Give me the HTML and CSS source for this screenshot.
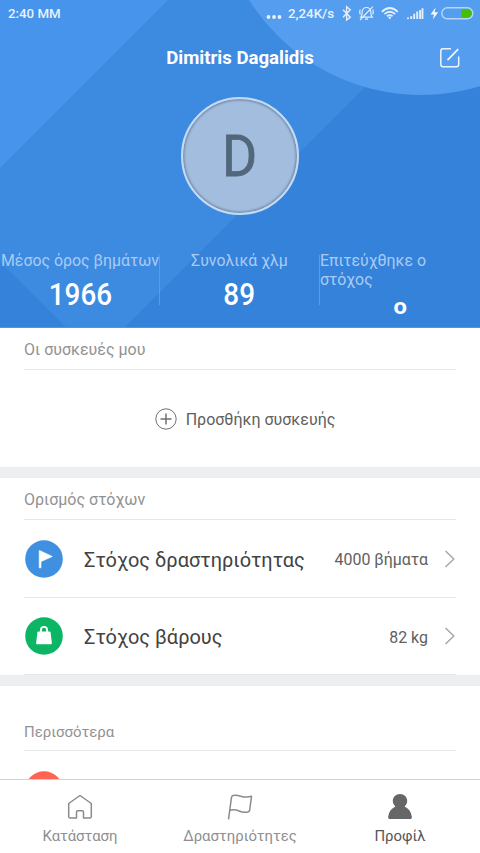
FILE: index.html
```html
<!DOCTYPE html>
<html lang="el">
<head>
<meta charset="utf-8">
<title>Προφίλ</title>
<link rel="stylesheet" href="styles.css">
</head>
<body>
<div class="app">
  <header class="hero">
    <svg class="hero-bg" width="480" height="328" viewBox="0 0 480 328">
      <rect width="480" height="328" fill="#3582db"/>
      <path d="M0 0H480L452 0L124 328H67L0 262Z" fill="#3d8ae1"/>
      <path d="M0 0H168L0 168Z" fill="#4694eb"/>
      <circle cx="421" cy="-108" r="203" fill="#559dee"/>
      <path d="M0 327.5H480" stroke="#5095df"/>
    </svg>
    <div class="status">
      <span class="time">2:40 ΜΜ</span>
      <div class="status-right">
        <svg class="dots" width="16" height="27" viewBox="0 0 16 27" fill="#e9f2fc"><circle cx="2.5" cy="17" r="1.9"/><circle cx="8" cy="17" r="1.9"/><circle cx="13.500" cy="17" r="1.9"/></svg>
        <span class="speed">2,24K/s</span>
        <svg class="icons" width="138" height="27" viewBox="338 0 138 27" fill="none" stroke="#e4effc" stroke-width="1.4">
          <path d="M343 9.800L350.300 17.200L346.600 20V6.800L350.300 9.800L343 17.200"/>
          <g stroke-width="1.200">
            <path d="M360.800 17.200C362.300 15.800 362 13.500 362.200 11.500C362.600 8.800 364.300 7.500 366.500 7.500S370.400 8.800 370.800 11.500C371 13.500 370.700 15.800 372.200 17.200ZM365 19.200H368M360 20L372.800 6.600"/>
            <path d="M360.300 9.500Q359 12 360.300 14.500M372.700 9.500Q374 12 372.700 14.500"/>
          </g>
          <g stroke-width="1.800">
            <path d="M381.800 11.800Q389.800 4.200 397.800 11.800M384.400 14.200Q389.800 9.300 395.200 14.200M387 16.300Q389.800 13.900 392.600 16.300"/>
          </g>
          <circle cx="389.800" cy="17.800" r="1.200" fill="#e4effc" stroke="none"/>
          <path d="M408 19V17.600M411.200 19V16.200M414.200 19V13.700M417.200 19V11.500M420.100 19V10M422.500 19V8.200" stroke-width="1.900"/>
          <path d="M435.600 7.500L430.500 14.500H434L432.800 19.500L438.200 12.300H434.700Z" fill="#f2f8ff" stroke="none"/>
          <rect x="441.800" y="7.800" width="31" height="11" rx="5.500" stroke="#b7d5f7"/>
          <path d="M461.500 9.200H467.500A4.200 4.200 0 0 1 467.500 17.600H461.500Z" fill="#43c000" stroke="none"/>
        </svg>
      </div>
    </div>
    <div class="titlebar">
      <h1>Dimitris Dagalidis</h1>
      <svg class="edit" width="22" height="22" viewBox="0 0 22 22" fill="none" stroke="#edf5fd" stroke-width="1.500"><path d="M12 1.800H4Q1.800 1.800 1.800 4V17.500Q1.800 19.700 4 19.700H17.500Q19.700 19.700 19.700 17.500V9.500"/><path d="M8.500 13.200L19.200 2.200" stroke-width="1.800"/></svg>
    </div>
    <div class="avatar"><span>D</span></div>
    <div class="stats">
      <div class="stat"><p>Μέσος όρος βημάτων</p><b>1966</b></div>
      <div class="stat"><p>Συνολικά χλμ</p><b>89</b></div>
      <div class="stat last"><p>Επιτεύχθηκε ο στόχος</p><b>o</b></div>
    </div>
  </header>

  <main class="content">
    <section class="devices">
      <h2>Οι συσκευές μου</h2>
      <div class="add">
        <svg width="22" height="22" viewBox="0 0 22 22" fill="none" stroke="#707070"><circle cx="11" cy="11" r="10.200"/><path d="M5.500 11H16.500M11 5.500V16.500" stroke-width="1.500"/></svg>
        <span>Προσθήκη συσκευής</span>
      </div>
    </section>
    <section class="goals">
      <h2>Ορισμός στόχων</h2>
      <div class="row">
        <svg width="38" height="38" viewBox="0 0 38 38"><circle cx="19" cy="19" r="18.800" fill="#4090e1"/><path d="M14.700 10.500L27.300 16.500L16 21.600V27.800H14.200V10.800Z" fill="#fff" stroke="#fff" stroke-width=".6" stroke-linejoin="round"/></svg>
        <span class="name">Στόχος δραστηριότητας</span>
        <span class="value">4000 βήματα</span>
        <svg class="chev" width="12" height="18" viewBox="0 0 12 18" fill="none" stroke="#a9a9a9" stroke-width="1.500"><path d="M1.500 1L9.800 9L1.500 17"/></svg>
      </div>
      <div class="row">
        <svg width="38" height="38" viewBox="0 0 38 38"><circle cx="19" cy="19" r="18.800" fill="#0cb563"/><path d="M13.200 14.500H24.800Q25.400 14.500 25.500 15.200L26.900 26Q27 27.200 26 27.200H12Q11 27.200 11.100 26L12.500 15.200Q12.600 14.500 13.200 14.500Z" fill="#fff"/><path d="M16 15.500V12.500Q16 9.800 19 9.800T22 12.500V15.500" fill="none" stroke="#fff" stroke-width="1.800"/></svg>
        <span class="name">Στόχος βάρους</span>
        <span class="value">82 kg</span>
        <svg class="chev" width="12" height="18" viewBox="0 0 12 18" fill="none" stroke="#a9a9a9" stroke-width="1.500"><path d="M1.500 1L9.800 9L1.500 17"/></svg>
      </div>
    </section>
    <section class="more">
      <h2>Περισσότερα</h2>
      <div class="row"><svg width="38" height="38" viewBox="0 0 38 38"><circle cx="19" cy="19" r="18.800" fill="#ff6452"/></svg></div>
    </section>
  </main>

  <nav class="tabs">
    <div class="tab">
      <svg width="28" height="28" viewBox="0 0 28 28" fill="none" stroke="#8b8b8b" stroke-width="1.500" stroke-linejoin="round"><path d="M2.700 10.500L14 2.500L25.300 10.500V23.500Q25.300 25 23.800 25H17.500V18.800Q17.500 17.700 16.400 17.700H11.600Q10.500 17.700 10.500 18.800V25H4.200Q2.700 25 2.700 23.500Z"/></svg>
      <span>Κατάσταση</span>
    </div>
    <div class="tab">
      <svg width="28" height="28" viewBox="0 0 28 28" fill="none" stroke="#8b8b8b" stroke-width="1.500" stroke-linecap="round" stroke-linejoin="round"><path d="M2.600 25.800L5.500 4.200Q6 2.400 8 2.300C15 1.500 16 6 25.500 3.300L23.700 17Q23.400 18.700 21.800 19C13 20.800 13 15 3.700 17.300"/></svg>
      <span>Δραστηριότητες</span>
    </div>
    <div class="tab active">
      <svg width="28" height="28" viewBox="0 0 28 28" fill="#666"><path d="M14 .900C18.100 .900 21.200 4 21.200 7.800C21.200 10.300 20.200 12.200 18.600 13.500C22.500 15.300 25 18.600 25.800 23.500Q26.100 26.100 24 26.100H4Q1.900 26.100 2.200 23.500C3 18.600 5.500 15.300 9.400 13.500C7.800 12.200 6.800 10.300 6.800 7.800C6.800 4 9.900 .900 14 .900Z"/></svg>
      <span>Προφίλ</span>
    </div>
  </nav>
</div>
</body>
</html>
```
FILE: styles.css
```css
* { box-sizing: border-box; }
body, h1, h2, p { margin: 0; font-weight: 400; }
body { font-family: Roboto, "Noto Sans", sans-serif; background: #fff; }
svg { display: block; flex: none; }
.app { width: 480px; height: 853px; display: flex; flex-direction: column; overflow: hidden; }

.hero { height: 328px; flex: none; position: relative; isolation: isolate; color: #fff; }
.hero-bg { position: absolute; inset: 0; z-index: -1; }
.status { height: 27px; display: flex; justify-content: space-between; padding: 0 4px 0 8px; font-size: 13.3px; font-weight: 500; line-height: 27px; color: #e9f2fc; }
.status-right { display: flex; }
.speed { width: 50px; margin: 0 0 0 6px; white-space: nowrap; }
.titlebar { height: 62px; display: grid; grid-template-columns: 60px 1fr 60px; align-items: center; }
h1 { grid-column: 2; text-align: center; font-size: 18.6px; line-height: 24px; font-weight: 700; }
.edit { margin-left: 19px; margin-top: -1px; }
.avatar { width: 118px; height: 118px; margin: 8px auto 0; border: 2px solid #c4daf5; border-radius: 50%; background: #a2bddd; box-shadow: inset 0 0 2px 1.5px #7990ae; display: flex; align-items: center; justify-content: center; color: #53677c; font-size: 57px; font-weight: 400; line-height: 60px; -webkit-text-stroke: .8px #53677c; }
.avatar span { margin-top: 1px; transform: scaleX(.94); }
.stats { display: grid; grid-template-columns: repeat(3, 160px); margin-top: 36px; }
.stat { position: relative; height: 70px; display: flex; flex-direction: column; align-items: center; }
.stat + .stat::before { content: ""; position: absolute; left: 0; top: 4px; width: 1px; height: 50px; background: #5b9ae4; }
.stat:nth-child(n+2) p { margin-left: 1px; }
.stat:nth-child(n+2) { left: -1px; }
.stat p { font-size: 15.9px; line-height: 19px; color: #a9cbf3; white-space: nowrap; }
.stat.last p { white-space: normal; width: 158px; margin-left: 0; }
.stat b { font-size: 32px; line-height: 38px; margin-top: 5px; font-weight: 500; transform: scaleX(.87); }
.stat.last b { margin: 5px 0 0 2px; font-size: 22px; line-height: 26px; font-weight: 700; transform: scaleX(1.08); }

.content { flex: 1; min-height: 0; overflow: hidden; background: #fff; }
h2 { margin: 0 24px; height: 42px; line-height: 44px; font-size: 16px; color: #929292; border-bottom: 1px solid #e7e7e7; }
.devices { height: 150px; border-bottom: 11px solid #edeef0; }
.add { height: 97px; display: flex; align-items: center; justify-content: center; gap: 9px; padding-left: 10px; font-size: 16px; color: #606060; }
.add span { margin-top: 2px; }
.goals { height: 208px; border-bottom: 11px solid #edeef0; }
.row { height: 78px; margin: 0 24px; border-bottom: 1px solid #e6e6e6; display: flex; align-items: center; padding-left: 1px; }
.goals .row + .row { height: 77px; }
.name { margin: 3px 0 0 21px; font-size: 19.95px; color: #424242; }
.row + .row .name { margin-top: 2px; }
.value { margin: 2px 0 0 auto; font-size: 15.95px; color: #606060; }
.chev { margin-left: 16px; }
.more { padding-top: 23px; }
.more h2 { font-size: 15px; line-height: 47px; }

.tabs { flex: none; height: 74px; border-top: 1px solid #d2d2d2; background: #fff; display: grid; grid-template-columns: repeat(3, 1fr); }
.tab { display: flex; flex-direction: column; align-items: center; padding-top: 13px; font-size: 14.9px; line-height: 20px; color: #8f8f8f; }
.tab span { margin-top: 5px; }
.active { color: #555; }
```
